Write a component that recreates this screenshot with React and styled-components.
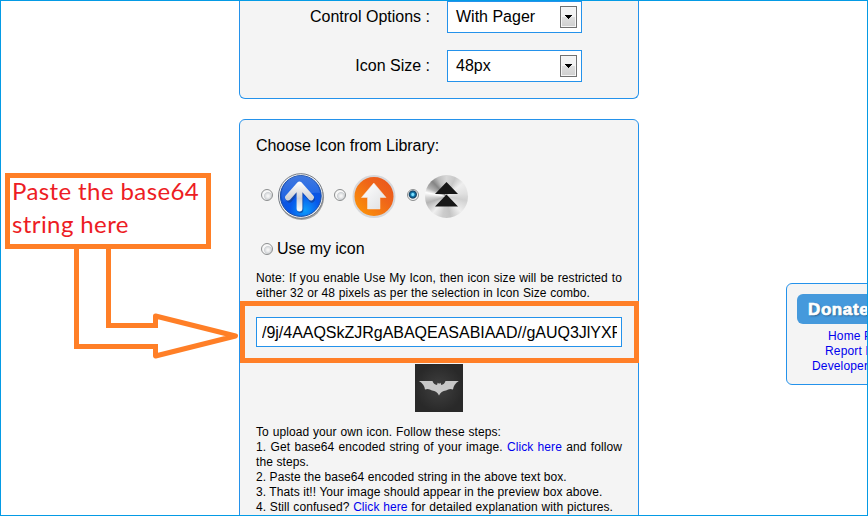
import React from 'react';
import styled, { createGlobalStyle } from 'styled-components';

const Global = createGlobalStyle`
  * { box-sizing: border-box; }
  body { margin: 0; background: #fff; color: #000; font-family: "Liberation Sans", Arial, sans-serif; }
`;
const Page = styled.div`
  position: relative; width: 868px; height: 516px; overflow: hidden;
  display: flex; align-items: flex-start; padding-left: 239px; gap: 147px;
  &::after { content: ''; position: absolute; inset: 0; border: 1px solid #049be5; pointer-events: none; }
`;
const Main = styled.main`
  flex: none; width: 400px; display: flex; flex-direction: column; gap: 20px;
`;
const Panel = styled.section`
  background: #f4f4f4; border: 1px solid #2492eb; border-radius: 6px;
`;
const OptionsPanel = styled(Panel)`
  height: 99px; padding-top: 1px; border-top: 0; border-top-left-radius: 0; border-top-right-radius: 0;
  display: flex; flex-direction: column; gap: 17px;
`;
const OptionRow = styled.div`
  display: grid; grid-template-columns: 190px 135px; column-gap: 17px; height: 32px; align-items: center; font-size: 16px;
`;
const Label = styled.span`text-align: right; line-height: 20px;`;
const Select = styled.div`
  height: 32px; background: #fff; border: 1px solid #2492eb; padding: 0 4px 0 8px;
  display: flex; align-items: center; justify-content: space-between; line-height: 20px;
`;
const DropButton = styled.span`
  width: 17px; height: 22px; border: 1px solid #707070; background: linear-gradient(#f3f3f3 0 48%, #dedede 52%, #cfcfcf);
  box-shadow: inset 0 0 0 1px #f5f5f5; display: flex; align-items: center; justify-content: center;
`;
const IconPanel = styled(Panel)`
  height: 410px; padding: 15px 16px 0; display: flex; flex-direction: column;
`;
const Heading = styled.div`height: 22px; line-height: 22px; font-size: 16px; letter-spacing: -0.04px;`;
const Library = styled.div`display: flex; margin: 16px 0 0 5px; height: 48px;`;
const Choice = styled.label`
  display: flex; align-items: center; gap: ${p => p.$gap ?? 4}px; width: 73px; flex: none;
  > svg { flex: none; }
`;
const Radio = styled.span`
  flex: none; width: 12px; height: 12px; margin-top: -5px; border: 1px solid #8c8e8f; border-radius: 50%;
  background: ${p => p.$on
    ? 'radial-gradient(circle at 48% 45%, #7fe0ff 0 1px, #1680b5 2px, #103e60 3.6px, #f4f4f4 4.6px)'
    : 'radial-gradient(circle at 60% 60%, #f4f4f4 0 1px, #cfd2d5 3.6px, #f7f7f7 4.4px)'};
`;
const OwnChoice = styled.label`
  display: flex; align-items: center; gap: 4px; margin: 17px 0 0 5px; height: 22px; font-size: 16px; line-height: 22px; letter-spacing: -0.05px;
  ${Radio} { margin-top: -1px; }
`;
const Copy = styled.div`
  font-size: 12px; line-height: 15px; margin-top: ${p => p.$top}px; height: ${p => p.$height}px; flex: none;
`;
const Line = styled.div`
  width: ${p => p.$w}px; white-space: nowrap; text-align-last: justify; letter-spacing: 0.08px;
`;
const Link = styled.a`color: #00e; text-decoration: none;`;
const TextBox = styled.div`
  flex: none; height: 30px; margin-top: 16px; border: 1px solid #2492eb; background: #fff; padding: 0 4px 0 5px;
  font-size: 16px; line-height: 29px;
`;
const TextValue = styled.div`overflow: hidden; white-space: nowrap; letter-spacing: -0.02px;`;
const Preview = styled.div`margin: 17px auto 0; height: 48px; svg { display: block; }`;
const Side = styled.aside`
  flex: none; width: 160px; height: 102px; margin-top: 283px; background: #f4f4f4; border: 1px solid #2492eb;
  border-radius: 6px; padding: 10px;
`;
const Donate = styled.div`
  height: 30px; border-radius: 6px; background: #4599dc; color: #fff; padding-left: 11px;
  font: 700 17px/31px "Liberation Sans", Arial, sans-serif; letter-spacing: 0.6px;
  -webkit-text-stroke: 0.7px #fff; text-shadow: 1px 1px 2px #24557f;
`;
const SideLinks = styled.nav`display: flex; flex-direction: column; margin-top: 5px; font-size: 12px; line-height: 15px;`;
const SideLink = styled(Link)`padding-left: ${p => p.$indent}px; white-space: nowrap; letter-spacing: 0.15px;`;
const Note = styled.div`
  position: absolute; left: 5px; top: 173px; width: 206px; height: 76px; border: 5px solid #ff7f27; background: #fff;
  color: #ed1c24; font: 24px/33px Lato, sans-serif; letter-spacing: 0.4px; padding-left: 2px;
`;
const NoteText = styled.div`margin-top: -4px;`;
const NoteLine = styled.div`white-space: nowrap;`;
const Arrow = styled.svg`position: absolute; left: 70px; top: 245px;`;
const Highlight = styled.div`
  position: absolute; left: 240px; top: 301px; width: 399px; height: 62px; border: 5px solid #ff7f27;
`;

const Caret = () => <svg width="7" height="4" shapeRendering="crispEdges"><path d="M0 0h7L3.5 4z" /></svg>;

const BlueIcon = () => (
  <svg width="48" height="48" viewBox="0 0 48 48">
    <defs>
      <radialGradient id="b" cx=".6" cy=".85" r=".8"><stop offset="0" stopColor="#0c9dfc" /><stop offset=".45" stopColor="#0758ea" /><stop offset="1" stopColor="#1552cf" /></radialGradient>
      <linearGradient id="bs" x2="0" y2="1"><stop stopColor="#76a9f5" /><stop offset="1" stopColor="#2c6ee8" /></linearGradient>
      <linearGradient id="ba" gradientUnits="userSpaceOnUse" x1="0" y1="9" x2="0" y2="39"><stop stopColor="#fff" /><stop offset=".55" stopColor="#cfd1d6" /><stop offset="1" stopColor="#fff" /></linearGradient>
    </defs>
    <circle cx="24.5" cy="24.5" r="22.5" fill="#777" opacity=".65" />
    <circle cx="23.8" cy="23" r="22.3" fill="#f3f3f3" stroke="#737982" />
    <circle cx="23.8" cy="23" r="20.4" fill="url(#b)" stroke="#174ba6" />
    <path d="M4.5 22A19.3 19.3 0 0 1 43 20C31 19 18 23 7 29Q4.8 26 4.5 22Z" fill="url(#bs)" opacity=".45" />
    <path d="M11.5 25.5 22.5 12 34 25.5M22.5 12.5V36" transform="translate(.8 1)" fill="none" stroke="#123c91" opacity=".65" strokeWidth="6" strokeLinecap="round" strokeLinejoin="round" />
    <path d="M11 24.5 22.5 11.5 34 24.5M22.5 12V35.500" fill="none" stroke="url(#ba)" strokeWidth="5.8" strokeLinecap="round" strokeLinejoin="round" />
  </svg>
);
const OrangeIcon = () => (
  <svg width="48" height="48" viewBox="0 0 48 48">
    <defs>
      <linearGradient id="o" x1="0" y1="1" x2="1" y2="0"><stop stopColor="#ff9c05" /><stop offset=".6" stopColor="#ef6519" /><stop offset="1" stopColor="#e9521e" /></linearGradient>
      <linearGradient id="oa" x2="1" y2="1"><stop stopColor="#fff" /><stop offset="1" stopColor="#dedfe2" /></linearGradient>
    </defs>
    <circle cx="24" cy="23.500" r="20.500" fill="url(#o)" stroke="#d6d7da" strokeWidth="2" />
    <path d="M23.800 10 36 24.500h-6v11.500H17.500V24.500H11.500z" fill="url(#oa)" stroke="#f5e9df" strokeWidth=".5" />
  </svg>
);
const Metal = styled.span`
  flex: none; width: 43px; height: 43px; border-radius: 50%; margin-bottom: 2px;
  display: flex; align-items: center; justify-content: center;
  background: conic-gradient(#d8d8d8, #c8c8c8 7%, #eee 14%, #e1e1e1 22%, #d0d0d0 28%, #eee 38%, #c4c4c4 47%, #ccc 53%, #efefef 61%, #b4b4b4 70%, #d2d2d2 74%, #fff 78%, #b3b3b3 82%, #858585 88%, #bcbcbc 93%, #d8d8d8);
`;
const MetalIcon = () => (
  <Metal><svg width="43" height="43"><path d="M21.500 7 33 19H10zM21.500 19.500 33 31.500H10z" fill="#171717" /></svg></Metal>
);
const BatPreview = () => (
  <svg width="48" height="48" viewBox="0 0 48 48">
    <defs><radialGradient id="p"><stop stopColor="#404040" /><stop offset="1" stopColor="#292929" /></radialGradient></defs>
    <path fill="url(#p)" d="M0 0h48v48H0z" />
    <path fill="#c8c8c8" d="M4 17H17.500Q18.500 20.500 22 21L22.700 18.700 23.700 19.500H24.700L25.500 18.700 26.200 21Q29.500 20.500 30.500 17H43.800Q38.500 20.500 38 25.500 34.500 24 31 26.500 26 27 24 31.500 22 27 17 26.500 13.500 24 10 25.500 9.500 20.500 4 17Z" />
  </svg>
);

export default function App() {
  return (
    <Page>
      <Global />
      <Main>
        <OptionsPanel>
          <OptionRow><Label>Control Options :</Label><Select>With Pager<DropButton><Caret /></DropButton></Select></OptionRow>
          <OptionRow><Label>Icon Size :</Label><Select>48px<DropButton><Caret /></DropButton></Select></OptionRow>
        </OptionsPanel>
        <IconPanel>
          <Heading>Choose Icon from Library:</Heading>
          <Library>
            <Choice><Radio /><BlueIcon /></Choice>
            <Choice><Radio /><OrangeIcon /></Choice>
            <Choice $gap={6}><Radio $on /><MetalIcon /></Choice>
          </Library>
          <OwnChoice><Radio />Use my icon</OwnChoice>
          <Copy $top={11} $height={30}>
            <Line $w={366}>Note: If you enable Use My Icon, then icon size will be restricted to</Line>
            <Line $w={334}>either 32 or 48 pixels as per the selection in Icon Size combo.</Line>
          </Copy>
          <TextBox><TextValue>/9j/4AAQSkZJRgABAQEASABIAAD//gAUQ3JlYXRlZCB3aXRo</TextValue></TextBox>
          <Preview><BatPreview /></Preview>
          <Copy $top={13} $height={90}>
            <Line $w={245}>To upload your own icon. Follow these steps:</Line>
            <Line $w={366}>1. Get base64 encoded string of your image. <Link>Click here</Link> and follow</Line>
            <Line $w={53}>the steps.</Line>
            <Line $w={309}>2. Paste the base64 encoded string in the above text box.</Line>
            <Line $w={346}>3. Thats it!! Your image should appear in the preview box above.</Line>
            <Line $w={357}>4. Still confused? <Link>Click here</Link> for detailed explanation with pictures.</Line>
          </Copy>
        </IconPanel>
      </Main>
      <Side>
        <Donate>Donate</Donate>
        <SideLinks>
          <SideLink $indent={31}>Home Page</SideLink>
          <SideLink $indent={28}>Report Bug</SideLink>
          <SideLink $indent={15}>Developer</SideLink>
        </SideLinks>
      </Side>
      <Arrow width="170" height="120" fill="none" stroke="#ff7f27" strokeWidth="5" strokeLinejoin="round" strokeLinecap="butt">
        <path strokeLinejoin="miter" d="M38.500 0V80.500H85.500M6.500 0V101.500H85.500" />
        <path d="M85.500 83V71L165.500 91 85.500 111V99" />
      </Arrow>
      <Note><NoteText><NoteLine>Paste the base64</NoteLine><NoteLine>string here</NoteLine></NoteText></Note>
      <Highlight />
    </Page>
  );
}
